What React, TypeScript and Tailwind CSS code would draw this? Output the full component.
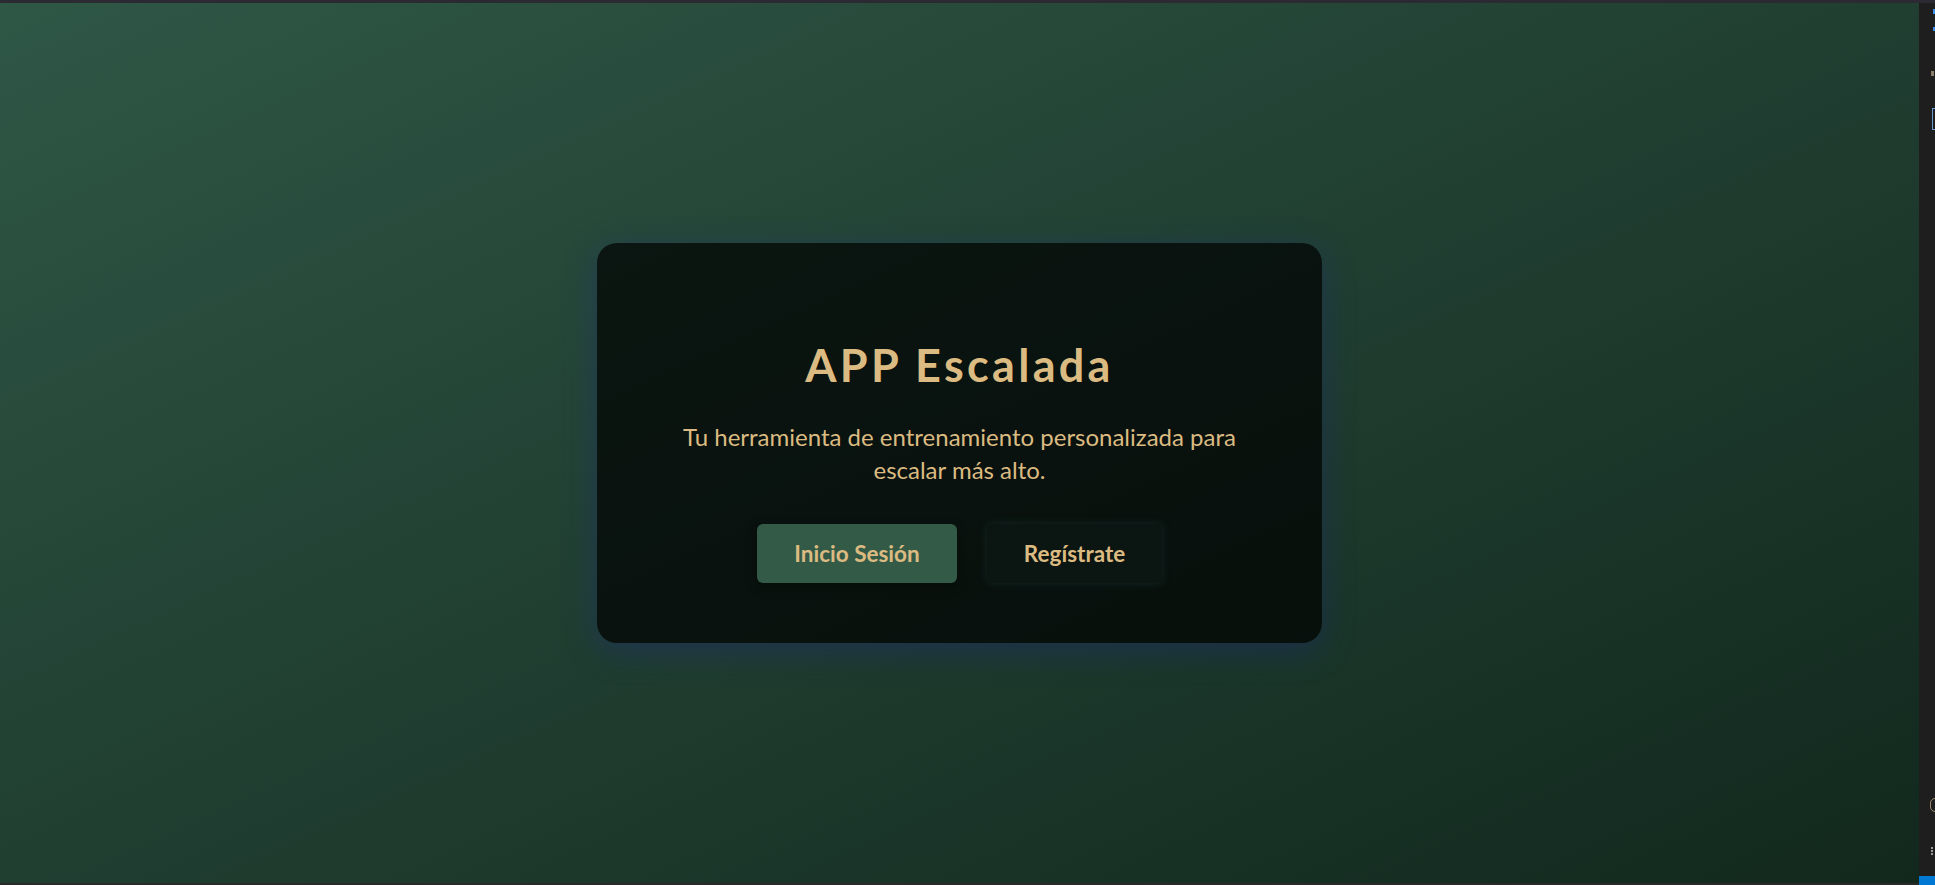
export default function App() {
  return (
    <div className="h-[885px] w-full flex flex-col bg-[#2b2a33] overflow-hidden" style={{ fontFamily: "Lato, 'Open Sans', sans-serif" }}>
      <div className="h-[3px] bg-[#2b2a33]" />
      <div className="flex flex-1 min-h-0">
        <main className="flex-1 flex items-center justify-center bg-gradient-to-br from-[#2f5746] to-[#12281d] border-b-2 border-[#2a2a2a]">
          <div className="w-[725px] h-[400px] flex flex-col items-center px-[70px] pt-[95px] pb-[60px] rounded-[20px] bg-black/70 shadow-[0_8px_32px_rgba(31,38,135,0.37)]">
            <h1 className="text-[45px] leading-[54px] font-bold tracking-[3.3px] text-[#dbbb81]">APP Escalada</h1>
            <p className="mt-[28px] max-w-[575px] text-center text-[24px] leading-[33px] text-[#dbbb81]">
              Tu herramienta de entrenamiento personalizada para escalar más alto.
            </p>
            <div className="mt-[38px] flex gap-[30px]">
              <button className="h-[59px] w-[200px] rounded-[6px] bg-[#335a47] text-[22.5px] font-bold text-[#dbbb81] shadow-[0_4px_12px_rgba(0,0,0,0.3)]">
                Inicio Sesión
              </button>
              <button className="h-[59px] w-[175px] rounded-[6px] bg-[#0b1511] text-[22.5px] font-bold text-[#dbbb81] shadow-[0_0_8px_rgba(40,80,90,0.35)]">
                Regístrate
              </button>
            </div>
          </div>
        </main>
        <aside className="w-[16px] bg-[#1e1e1e] relative flex flex-col">
          <div className="absolute right-0 top-[6px] w-[2px] h-[5px] bg-[#3b8eea]" />
          <div className="absolute right-0 top-[24px] w-[2px] h-[4px] bg-[#3b8eea]" />
          <div className="absolute right-[1px] top-[68px] w-[3px] h-[5px] bg-[#8a7d6a]" />
          <div className="absolute right-0 top-[105px] w-[3px] h-[22px] border-l border-y border-[#6c9ccf]" />
          <div className="absolute right-[-5px] top-[795px] w-[10px] h-[14px] rounded-full border border-[#9b8a6f]" />
          <div className="absolute right-0 top-[844px] w-[4px] h-[8px] border-l-2 border-dotted border-[#9a9a9a]" />
          <div className="absolute left-0 right-0 bottom-0 h-[9px] bg-[#0078d4]" />
        </aside>
      </div>
    </div>
  );
}
